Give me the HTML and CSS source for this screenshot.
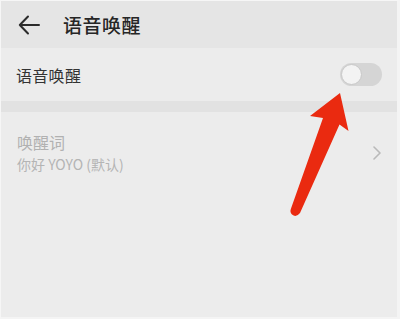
FILE: index.html
```html
<!DOCTYPE html>
<html lang="zh">
<head>
<meta charset="utf-8">
<link rel="stylesheet" href="styles.css">
</head>
<body>
<div class="frame">
  <header class="topbar">
    <svg class="back" width="22" height="20" viewBox="0 0 22 20">
      <path d="M10 1.5 L1.8 10 L10 18.5 M1.8 10 H21" fill="none" stroke="#2b2b2b" stroke-width="2" stroke-linecap="round" stroke-linejoin="round"/>
    </svg>
    <h1 class="title">语音唤醒</h1>
  </header>
  <div class="row">
    <span class="row-label">语音唤醒</span>
    <span class="switch"><span class="knob"></span></span>
  </div>
  <div class="band"></div>
  <div class="item">
    <div class="item-text">
      <div class="item-title">唤醒词</div>
      <div class="item-sub">你好 YOYO (默认)</div>
    </div>
    <svg class="chev" width="8" height="14" viewBox="0 0 8 14">
      <path d="M1 1 L7 7 L1 13" fill="none" stroke="#b9b9b9" stroke-width="1.6" stroke-linecap="round" stroke-linejoin="round"/>
    </svg>
  </div>
  <svg class="arrow" width="400" height="319" viewBox="0 0 400 319">
    <path d="M340 93 L348.5 131 L339.5 124.5 L300 213 Q296 218 292 214.5 Q289.5 212 291 208.5 L323 118 L310 116 Z" fill="#ea2a10"/>
  </svg>
</div>
</body>
</html>
```
FILE: styles.css
```css
* { box-sizing: border-box; }
html, body { margin: 0; padding: 0; }
body {
  width: 400px;
  height: 319px;
  overflow: hidden;
  font-family: "Noto Sans CJK SC", "Noto Sans", sans-serif;
  background: #f4f4f4;
}
.frame {
  position: relative;
  width: 400px;
  height: 319px;
  border-top: 1px solid #f6f6f6;
  border-left: 1px solid #f6f6f6;
  border-right: 3px solid #f4f4f4;
  border-bottom: 2px solid #f4f4f4;
  background: #ececec;
  display: flex;
  flex-direction: column;
}
.topbar {
  height: 47px;
  background: #e5e5e5;
  display: flex;
  align-items: center;
  padding-left: 17px;
  flex-shrink: 0;
}
.back { display: block; margin-right: 23px; }
.title {
  margin: 0;
  font-size: 19px;
  font-weight: 500;
  color: #262626;
  line-height: 1;
  letter-spacing: 0.5px;
}
.row {
  height: 53px;
  background: #ececec;
  display: flex;
  align-items: center;
  justify-content: space-between;
  padding: 0 15px 0 15px;
  flex-shrink: 0;
}
.row-label {
  font-size: 16px;
  color: #333;
  letter-spacing: 0.3px;
}
.switch {
  width: 42px;
  height: 23px;
  border-radius: 12px;
  background: #d5d5d5;
  display: flex;
  align-items: center;
  padding-left: 1px;
}
.knob {
  width: 21px;
  height: 21px;
  border-radius: 50%;
  background: #f3f3f3;
  border: 1.5px solid #c8c8c8;
}
.band {
  height: 11px;
  background: #e2e2e2;
  flex-shrink: 0;
}
.item {
  display: flex;
  align-items: center;
  justify-content: space-between;
  padding: 19px 15px 0 16px;
}
.item-title {
  font-size: 16px;
  color: #b1b1b1;
  line-height: 22px;
}
.item-sub {
  font-size: 14px;
  color: #b4b4b4;
  line-height: 19px;
  margin-top: 2px;
}
.chev { display: block; margin-right: 1px; }
.arrow {
  position: absolute;
  left: -1px;
  top: -1px;
}
```
